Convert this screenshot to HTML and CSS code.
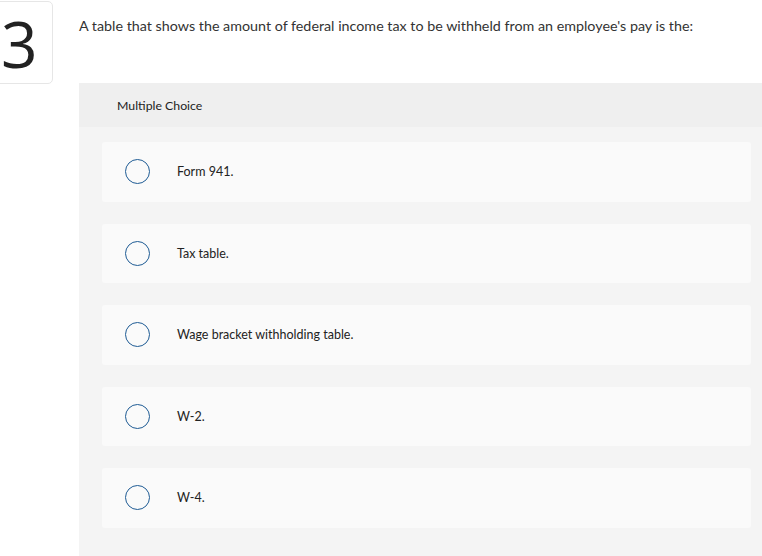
FILE: index.html
```html
<!DOCTYPE html>
<html>
<head>
<meta charset="utf-8">
<link rel="stylesheet" href="styles.css">
</head>
<body>
<div class="page">
  <div class="num-col">
    <div class="num-box">3</div>
  </div>
  <div class="content">
    <p class="question">A table that shows the amount of federal income tax to be withheld from an employee's pay is the:</p>
    <div class="panel">
      <div class="panel-head">Multiple Choice</div>
      <div class="panel-body">
        <div class="option"><span class="radio"></span><span class="label">Form 941.</span></div>
        <div class="option"><span class="radio"></span><span class="label">Tax table.</span></div>
        <div class="option"><span class="radio"></span><span class="label">Wage bracket withholding table.</span></div>
        <div class="option"><span class="radio"></span><span class="label">W-2.</span></div>
        <div class="option"><span class="radio"></span><span class="label">W-4.</span></div>
      </div>
    </div>
  </div>
</div>
</body>
</html>
```
FILE: styles.css
```css
html, body {
  margin: 0;
  padding: 0;
  background: #ffffff;
  overflow: hidden;
}
body {
  font-family: Lato, "Open Sans", "Liberation Sans", sans-serif;
  color: #222;
}
.page {
  display: flex;
  align-items: flex-start;
}
.num-col {
  width: 79px;
  flex: none;
}
.num-box {
  margin-left: -10px;
  margin-top: 1px;
  width: 63px;
  height: 83px;
  box-sizing: border-box;
  border: 1px solid #e6e6e6;
  border-radius: 5px;
  font-family: "Open Sans", Lato, sans-serif;
  font-size: 64px;
  line-height: 84px;
  padding-left: 10px;
  color: #222;
  font-weight: 400;
}
.content {
  flex: 1;
  min-width: 0;
}
.question {
  margin: 0;
  padding-top: 16px;
  height: 83px;
  box-sizing: border-box;
  font-size: 14.3px;
  line-height: 20px;
  color: #333;
}
.panel {
  background: #f4f4f4;
  margin-right: -12px;
  height: 480px;
}
.panel-head {
  background: #efefef;
  height: 44px;
  display: flex;
  align-items: center;
  padding-left: 38px;
  font-size: 12.3px;
  color: #222;
}
.panel-body {
  padding: 15px 23px 0 23px;
  display: flex;
  flex-direction: column;
  gap: 22px;
}
.option {
  background: #fafafa;
  border-radius: 3px;
  height: 59.5px;
  display: flex;
  align-items: center;
  padding-left: 23px;
  font-size: 12.5px;
  color: #222;
}
.radio {
  border: 1.5px solid #1e5b94;
  border-radius: 50%;
  flex: none;
  box-sizing: border-box;
  width: 25px;
  height: 25px;
}
.label {
  margin-left: 27px;
}
```
